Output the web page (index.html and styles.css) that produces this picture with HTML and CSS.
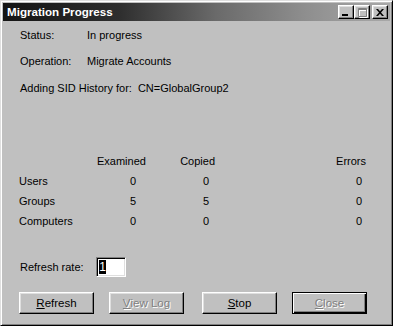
FILE: index.html
```html
<!DOCTYPE html>
<html>
<head>
<meta charset="utf-8">
<title>Migration Progress</title>
<link rel="stylesheet" href="styles.css">
</head>
<body>
<div class="window">
  <div class="titlebar">
    <span class="title">Migration Progress</span>
    <div class="controls">
      <span class="tbtn"><svg width="8" height="7" viewBox="0 0 8 7"><rect x="0" y="5" width="6" height="2" fill="#000"/></svg></span>
      <span class="tbtn tbtn-max"><svg width="9" height="9" viewBox="0 0 9 9"><path d="M0.5 0.5h8v8h-8z M0.5 1.5h8" fill="none" stroke="#808080" stroke-width="1"/></svg></span>
      <span class="tbtn tbtn-close"><svg width="8" height="7" viewBox="0 0 8 7"><path d="M0 0h2l2 2.2 2-2.2h2l-3 3.5 3 3.5h-2l-2-2.2-2 2.2h-2l3-3.5z" fill="#000"/></svg></span>
    </div>
  </div>
  <div class="content">
    <div class="field"><span class="label">Status:</span><span>In progress</span></div>
    <div class="field field-op"><span class="label">Operation:</span><span>Migrate Accounts</span></div>
    <div class="current">Adding SID History for:<span class="target">CN=GlobalGroup2</span></div>
    <div class="stats">
      <span></span><span class="head">Examined</span><span class="head">Copied</span><span class="head">Errors</span>
      <span class="rowlabel">Users</span><span class="num">0</span><span class="num">0</span><span class="num num-err">0</span>
      <span class="rowlabel">Groups</span><span class="num">5</span><span class="num">5</span><span class="num num-err">0</span>
      <span class="rowlabel">Computers</span><span class="num">0</span><span class="num">0</span><span class="num num-err">0</span>
    </div>
    <div class="rate">
      <span class="rate-label">Refresh rate:</span>
      <span class="input"><span class="sel">1</span></span>
    </div>
    <div class="buttons">
      <span class="btn"><u>R</u>efresh</span>
      <span class="btn btn-disabled"><u>V</u>iew Log</span>
      <span class="btn btn-stop"><u>S</u>top</span>
      <span class="btn btn-disabled btn-default"><u>C</u>lose</span>
    </div>
  </div>
</div>
</body>
</html>
```
FILE: styles.css
```css
html, body {
  margin: 0;
  padding: 0;
  background: #c0c0c0;
}
.window {
  width: 393px;
  height: 326px;
  box-sizing: border-box;
  background: #c0c0c0;
  border: 1px solid;
  border-color: #dfdfdf #000 #000 #dfdfdf;
  box-shadow: inset 1px 1px #fff, inset -1px -1px #808080;
  padding: 2px;
  font-family: "Liberation Sans", Arial, sans-serif;
  font-size: 11px;
  color: #000;
  display: flex;
  flex-direction: column;
}
.titlebar {
  height: 18px;
  background: linear-gradient(90deg, #141414 0%, #2e2e2e 30%, #6a6a6a 55%, #8e8e8e 78%, #a8a8a8 100%);
  display: flex;
  align-items: center;
  justify-content: space-between;
  padding: 0 2px 0 4px;
}
.title {
  color: #fff;
  font-weight: bold;
  font-size: 11.6px;
  line-height: 14px;
}
.controls {
  display: flex;
  align-items: center;
}
.tbtn {
  width: 16px;
  height: 14px;
  box-sizing: border-box;
  background: #c0c0c0;
  border: 1px solid;
  border-color: #fff #000 #000 #fff;
  box-shadow: inset -1px -1px #808080, inset 1px 1px #dfdfdf;
  display: flex;
  align-items: center;
  justify-content: center;
}
.tbtn svg { display: block; }
.tbtn-close { margin-left: 2px; }
.tbtn-max svg { filter: drop-shadow(1px 1px 0 #fff); }
.content {
  flex: 1;
  padding: 7px 16px 0 16px;
  display: flex;
  flex-direction: column;
  line-height: 14px;
}
.field {
  display: flex;
}
.field .label {
  width: 67px;
  padding-left: 1px;
}
.field-op { margin-top: 12px; }
.current {
  margin-top: 13px;
  padding-left: 1px;
}
.target { margin-left: 6px; }
.stats {
  margin-top: 59px;
  display: grid;
  grid-template-columns: 78px 45px 73px 151px;
  grid-auto-rows: 14px;
  row-gap: 6px;
}
.head { text-align: right; }
.num { text-align: right; padding-right: 6px; }
.num-err { padding-right: 4px; }
.rate {
  margin-top: 29px;
  display: flex;
  align-items: center;
  height: 20px;
}
.rate-label {
  width: 76px;
  padding-left: 1px;
}
.input {
  width: 30px;
  height: 20px;
  box-sizing: border-box;
  background: #fff;
  border: 1px solid;
  border-color: #808080 #fff #fff #808080;
  box-shadow: inset 1px 1px #000, inset -1px -1px #dfdfdf;
  padding: 2px 0 0 2px;
  display: flex;
}
.sel {
  background: #000;
  color: #fff;
  height: 14px;
  width: 7px;
  font-size: 12px;
  line-height: 14px;
  text-align: center;
}
.buttons {
  margin-top: 15px;
  display: flex;
  gap: 15px;
}
.btn-stop { margin-left: 3px; }
.btn {
  width: 75px;
  height: 22px;
  box-sizing: border-box;
  border: 1px solid;
  border-color: #fff #000 #000 #fff;
  box-shadow: inset -1px -1px #808080, inset 1px 1px #dfdfdf;
  display: flex;
  align-items: center;
  justify-content: center;
  font-size: 11.5px;
}
.btn u { text-decoration-thickness: 1px; text-underline-offset: 1px; }
.btn-disabled {
  color: #808080;
  text-shadow: 1px 1px 0 #fff;
}
.btn-default {
  border-color: #000;
  box-shadow: inset 1px 1px #fff, inset -1px -1px #000, inset -2px -2px #808080;
}
```
